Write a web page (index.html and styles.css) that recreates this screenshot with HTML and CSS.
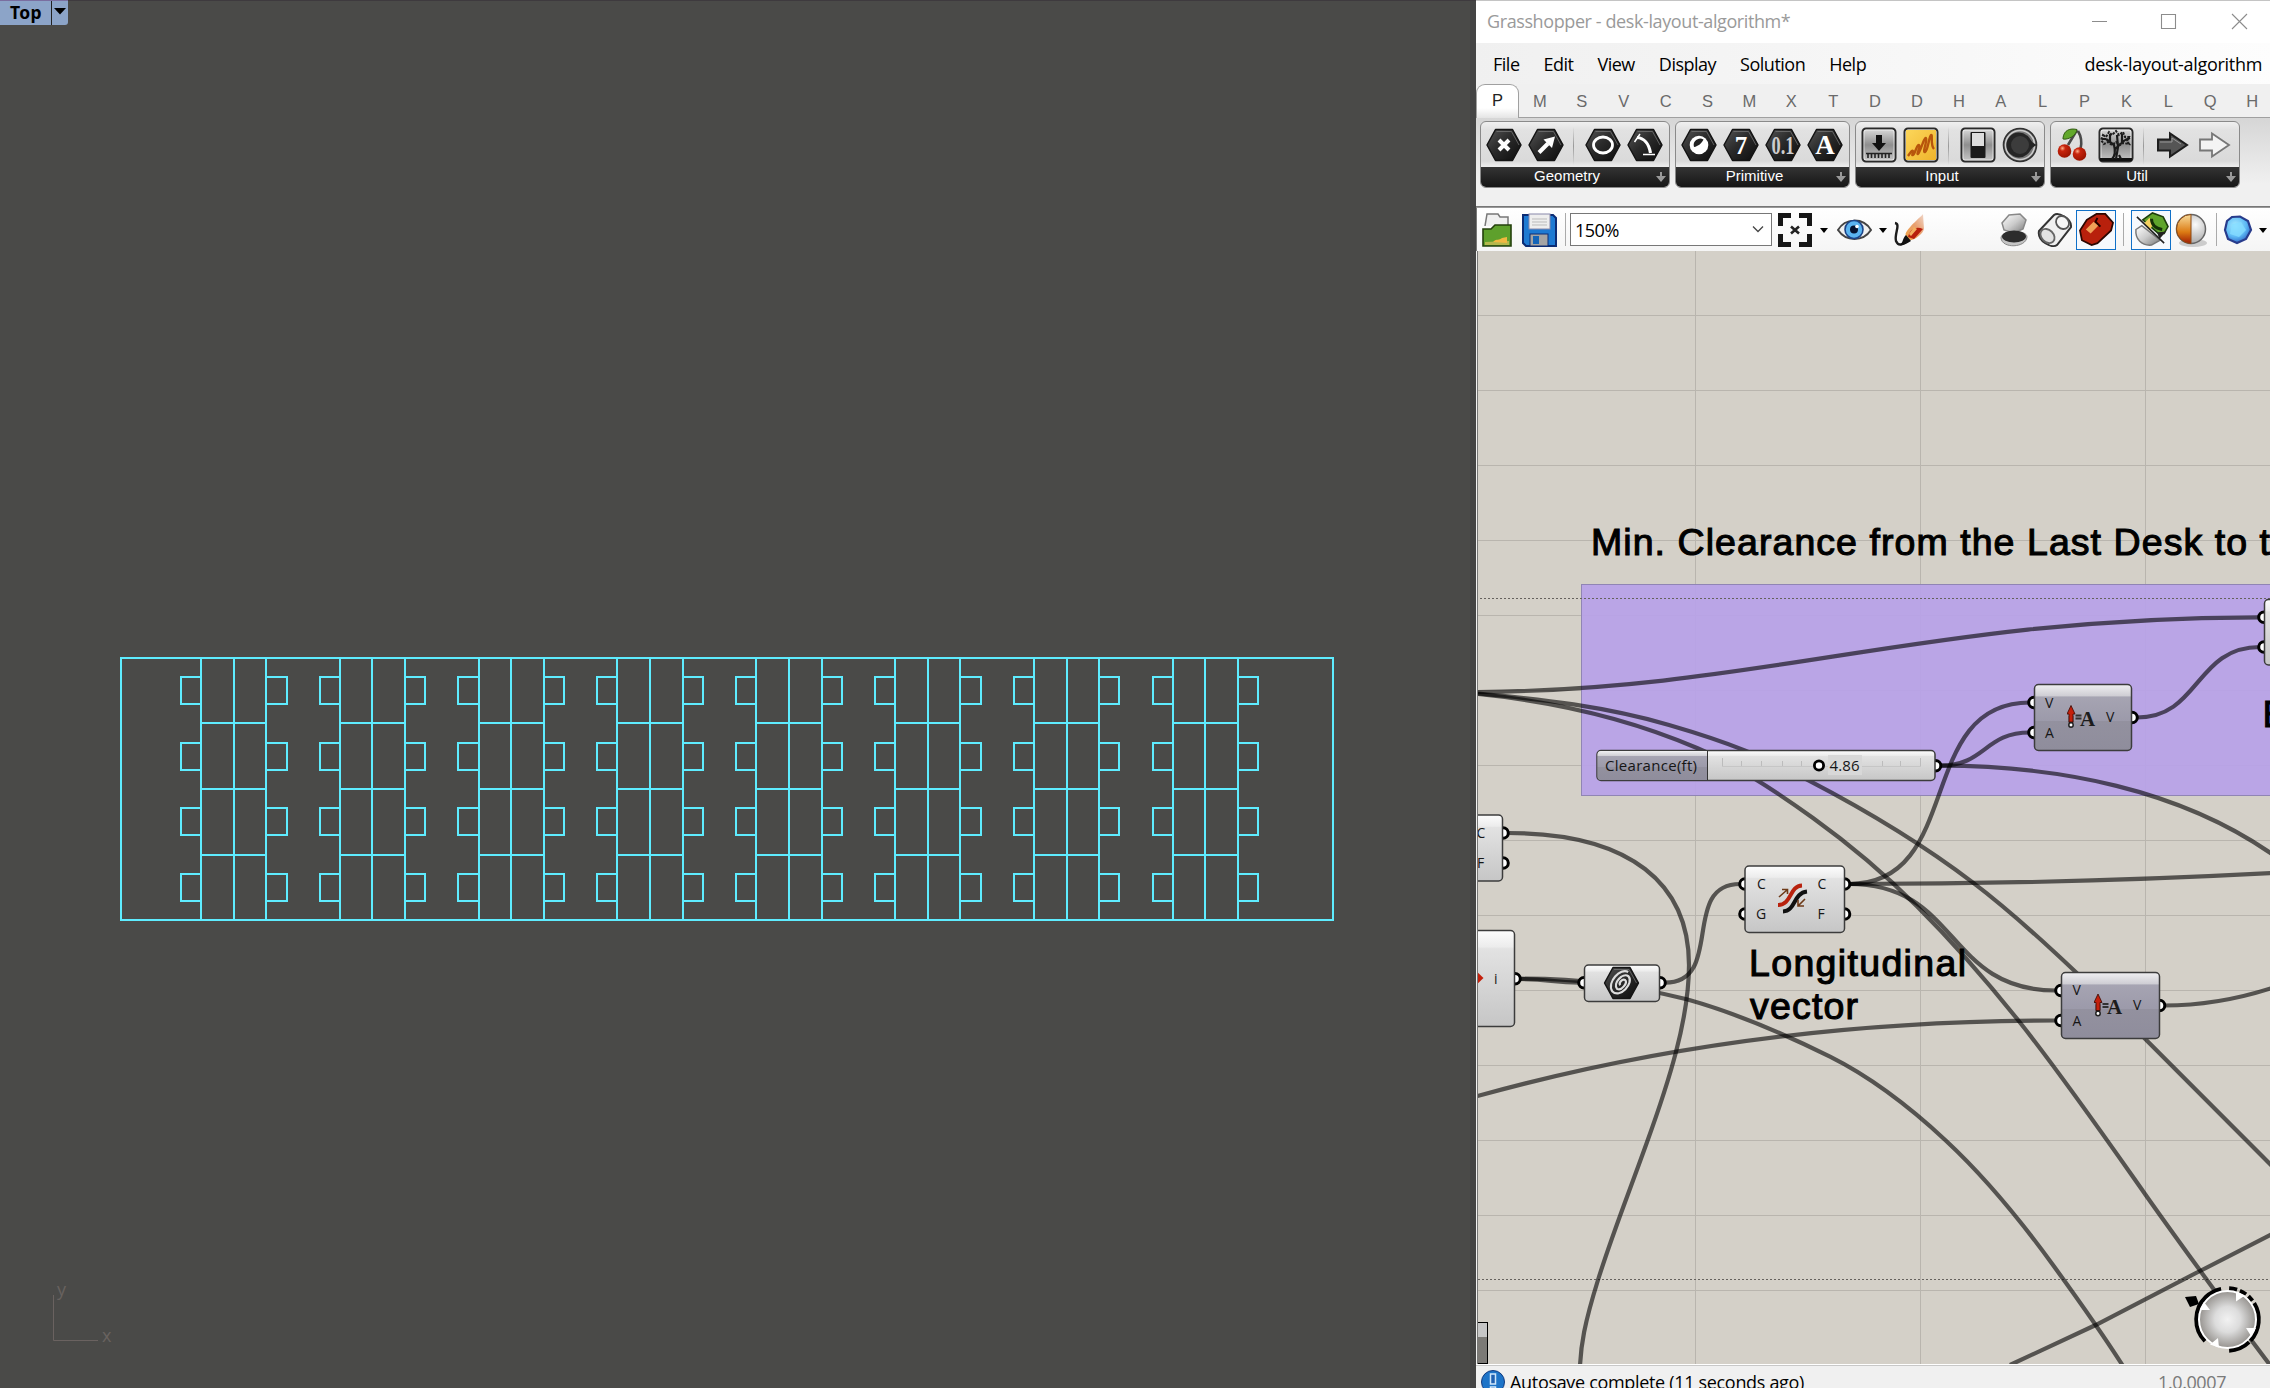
FILE: index.html
```html
<!DOCTYPE html>
<html lang="en">
<head>
<meta charset="utf-8">
<title>Grasshopper - desk-layout-algorithm*</title>
<link rel="stylesheet" href="styles.css">
</head>
<body>
<svg class="defs" width="0" height="0" aria-hidden="true">
  <defs>
    <linearGradient id="gHex" x1="0" y1="0" x2="1" y2="1"><stop offset="0" stop-color="#555"/><stop offset=".45" stop-color="#2b2b2b"/><stop offset="1" stop-color="#0c0c0c"/></linearGradient>
    <linearGradient id="gTile" x1="0" y1="0" x2="0" y2="1"><stop offset="0" stop-color="#dcdcdc"/><stop offset=".5" stop-color="#8e8e8e"/><stop offset="1" stop-color="#c8c8c8"/></linearGradient>
    <linearGradient id="gGold" x1="0" y1="0" x2="1" y2="1"><stop offset="0" stop-color="#fcd65a"/><stop offset="1" stop-color="#efb42c"/></linearGradient>
    <linearGradient id="gNode" x1="0" y1="0" x2="0" y2="1"><stop offset="0" stop-color="#fdfdfd"/><stop offset=".17" stop-color="#ececec"/><stop offset=".19" stop-color="#e2e2e2"/><stop offset="1" stop-color="#c6c6c6"/></linearGradient>
    <linearGradient id="gDark" x1="0" y1="0" x2="0" y2="1"><stop offset="0" stop-color="#f0f0f2"/><stop offset=".17" stop-color="#cfced4"/><stop offset=".19" stop-color="#a6a4b2"/><stop offset=".55" stop-color="#9c9aaa"/><stop offset=".56" stop-color="#93919f"/><stop offset="1" stop-color="#8f8d9c"/></linearGradient>
    <radialGradient id="gBall"><stop offset="0" stop-color="#f2f2f2"/><stop offset=".45" stop-color="#dcdcdc"/><stop offset="1" stop-color="#96938f"/></radialGradient>
    <radialGradient id="gCherry" cx=".35" cy=".3" r=".7"><stop offset="0" stop-color="#ffb08a"/><stop offset=".3" stop-color="#c8240c"/><stop offset="1" stop-color="#9c1400"/></radialGradient>
    <radialGradient id="gGem" cx=".4" cy=".35" r=".7"><stop offset="0" stop-color="#a8ecff"/><stop offset=".6" stop-color="#5cb8f4"/><stop offset="1" stop-color="#2a5cc0"/></radialGradient>
    <radialGradient id="gSilver" cx=".65" cy=".35" r=".7"><stop offset="0" stop-color="#fafafa"/><stop offset="1" stop-color="#a4a4a4"/></radialGradient>
    <linearGradient id="gAmber" x1="0" y1="0" x2="0" y2="1"><stop offset="0" stop-color="#f8dc9c"/><stop offset=".6" stop-color="#dc7c14"/><stop offset="1" stop-color="#a01c04"/></linearGradient>
    <linearGradient id="gFlame" x1="1" y1="0" x2="0" y2="1"><stop offset="0" stop-color="#f0d8cc"/><stop offset=".45" stop-color="#e8a070"/><stop offset="1" stop-color="#f0a040"/></linearGradient>
    <linearGradient id="gSteel" x1="0" y1="0" x2="1" y2="1"><stop offset="0" stop-color="#fff"/><stop offset=".5" stop-color="#ccc"/><stop offset="1" stop-color="#777"/></linearGradient>
    <symbol id="hex" viewBox="0 0 36 36"><path d="M9.500 2.500H26.500L35 18 26.500 33.500H9.500L1 18Z" fill="url(#gHex)" stroke="#141414" stroke-width="1.500" stroke-linejoin="round"/><path d="M10.500 4.500H25.500L33 18" fill="none" stroke="#7a7a7a" stroke-width="1" opacity=".7"/></symbol>
    <symbol id="tile" viewBox="0 0 36 36"><rect x="1.500" y="1.500" width="33" height="33" rx="3.500" fill="url(#gTile)" stroke="#2a2a2a" stroke-width="2"/><rect x="3" y="3" width="30" height="30" rx="2" fill="none" stroke="#fff" opacity=".6"/></symbol>
    <symbol id="vecamp" viewBox="0 0 26 26"><path d="M4 11V18" stroke="#2a0500" stroke-width="4.500"/><path d="M4 0.500L8 9H6V17H2V9H0Z" fill="#c4200c" stroke="#3a0800" stroke-width=".8"/><circle cx="4" cy="20" r="2.200" fill="#fff" stroke="#222" stroke-width="1.500"/><path d="M8.500 10.500h6M8.500 13.500h6" stroke="#333" stroke-width="1.800"/></symbol>
  </defs>
</svg>
<main class="screen">
  <section class="viewport">
    <div class="view-tab"><span class="view-name">Top</span><span class="view-drop"><svg width="12" height="7" viewBox="0 0 12 7"><path d="M0 0H12L6 6.500Z" fill="#000"/></svg></span></div>
    <svg class="plan" width="1476" height="1388" viewBox="0 0 1476 1388">
      <g class="cyan">
        <rect x="121" y="658" width="1212" height="262"/>
        <path d="M201 658V920M234 658V920M266 658V920M201 723H266M201 789H266M201 855H266"/>
        <path d="M201 677H181V704H201M201 743H181V770H201M201 808H181V835H201M201 874H181V901H201M266 677H287V704H266M266 743H287V770H266M266 808H287V835H266M266 874H287V901H266"/>
        <path d="M340 658V920M372 658V920M405 658V920M340 723H405M340 789H405M340 855H405"/>
        <path d="M340 677H320V704H340M340 743H320V770H340M340 808H320V835H340M340 874H320V901H340M405 677H425V704H405M405 743H425V770H405M405 808H425V835H405M405 874H425V901H405"/>
        <path d="M479 658V920M511 658V920M544 658V920M479 723H544M479 789H544M479 855H544"/>
        <path d="M479 677H458V704H479M479 743H458V770H479M479 808H458V835H479M479 874H458V901H479M544 677H564V704H544M544 743H564V770H544M544 808H564V835H544M544 874H564V901H544"/>
        <path d="M617 658V920M650 658V920M683 658V920M617 723H683M617 789H683M617 855H683"/>
        <path d="M617 677H597V704H617M617 743H597V770H617M617 808H597V835H617M617 874H597V901H617M683 677H703V704H683M683 743H703V770H683M683 808H703V835H683M683 874H703V901H683"/>
        <path d="M756 658V920M789 658V920M822 658V920M756 723H822M756 789H822M756 855H822"/>
        <path d="M756 677H736V704H756M756 743H736V770H756M756 808H736V835H756M756 874H736V901H756M822 677H842V704H822M822 743H842V770H822M822 808H842V835H822M822 874H842V901H822"/>
        <path d="M895 658V920M928 658V920M960 658V920M895 723H960M895 789H960M895 855H960"/>
        <path d="M895 677H875V704H895M895 743H875V770H895M895 808H875V835H895M895 874H875V901H895M960 677H981V704H960M960 743H981V770H960M960 808H981V835H960M960 874H981V901H960"/>
        <path d="M1034 658V920M1067 658V920M1099 658V920M1034 723H1099M1034 789H1099M1034 855H1099"/>
        <path d="M1034 677H1014V704H1034M1034 743H1014V770H1034M1034 808H1014V835H1034M1034 874H1014V901H1034M1099 677H1119V704H1099M1099 743H1119V770H1099M1099 808H1119V835H1099M1099 874H1119V901H1099"/>
        <path d="M1173 658V920M1205 658V920M1238 658V920M1173 723H1238M1173 789H1238M1173 855H1238"/>
        <path d="M1173 677H1153V704H1173M1173 743H1153V770H1173M1173 808H1153V835H1173M1173 874H1153V901H1173M1238 677H1258V704H1238M1238 743H1258V770H1238M1238 808H1258V835H1238M1238 874H1258V901H1238"/>
      </g>
      <path class="axis" d="M53.500 1295V1340.500H98"/>
      <text class="axis-name" x="57" y="1295.500">y</text><text class="axis-name" x="102" y="1342">x</text>
    </svg>
  </section>

  <section class="window">
    <header class="titlebar">
      <h1 class="title">Grasshopper - desk-layout-algorithm*</h1>
      <svg class="winbtns" width="170" height="42" viewBox="2084 0 170 42"><path d="M2092 20.500h15M2161.500 13.500h14v14h-14zM2232 13l15 15M2247 13l-15 15" fill="none" stroke="#8c8c8c" stroke-width="1.100"/></svg>
    </header>
    <nav class="menubar"><span>File</span><span>Edit</span><span>View</span><span>Display</span><span>Solution</span><span>Help</span><span class="doc">desk-layout-algorithm</span></nav>
    <nav class="tabs"><span class="tab active">P</span><span class="tab">M</span><span class="tab">S</span><span class="tab">V</span><span class="tab">C</span><span class="tab">S</span><span class="tab">M</span><span class="tab">X</span><span class="tab">T</span><span class="tab">D</span><span class="tab">D</span><span class="tab">H</span><span class="tab">A</span><span class="tab">L</span><span class="tab">P</span><span class="tab">K</span><span class="tab">L</span><span class="tab">Q</span><span class="tab">H</span></nav>
    <div class="ribbon">
      <div class="panel">
        <div class="icons">
          <svg viewBox="0 0 36 36"><use href="#hex"/><path d="M13 13L23 23M23 13L13 23" stroke="#fff" stroke-width="4"/></svg>
          <svg viewBox="0 0 36 36"><use href="#hex"/><path d="M11 25.500L20 16.500" stroke="#fff" stroke-width="4"/><path d="M15.500 12.500L27 9.500 24 21Z" fill="#fff"/></svg>
          <i class="sep"></i>
          <svg viewBox="0 0 36 36"><use href="#hex"/><ellipse cx="18" cy="18" rx="9.500" ry="8" fill="none" stroke="#fff" stroke-width="2.800"/></svg>
          <svg viewBox="0 0 36 36"><use href="#hex"/><path d="M10 10.500C17 11 22 17 23.500 26" fill="none" stroke="#fff" stroke-width="3.200"/><path d="M16 27.500H28M7.500 15L13 7" stroke="#fff" stroke-width="1.500"/></svg>
        </div>
        <div class="caption">Geometry<svg class="more" viewBox="0 0 12 12"><path d="M5 1h2v4h4L6 11 1 5h4z" fill="#999"/></svg></div>
      </div>
      <div class="panel narrow">
        <div class="icons">
          <svg viewBox="0 0 36 36"><use href="#hex"/><circle cx="18" cy="18" r="9.300" fill="#fff"/><path d="M13 20A6.500 6.500 0 0 1 22.500 12.500C21 16 17 19.500 13 20Z" fill="#222"/></svg>
          <svg viewBox="0 0 36 36"><use href="#hex"/><text class="glyph" x="18" y="27" font-size="25">7</text></svg>
          <svg viewBox="0 0 36 36"><use href="#hex"/><text class="glyph thin" x="18" y="26.500" font-size="25" textLength="23" lengthAdjust="spacingAndGlyphs">0.1</text></svg>
          <svg viewBox="0 0 36 36"><use href="#hex"/><text class="glyph" x="18" y="27" font-size="27">A</text></svg>
        </div>
        <div class="caption">Primitive<svg class="more" viewBox="0 0 12 12"><path d="M5 1h2v4h4L6 11 1 5h4z" fill="#999"/></svg></div>
      </div>
      <div class="panel">
        <div class="icons">
          <svg viewBox="0 0 36 36"><use href="#tile"/><path d="M15 8h6v8h4l-7 8-7-8h4z" fill="#111"/><path d="M5 26.500H31M7 26v5M10.500 26v5M14 26v5M17.500 26v5M21 26v5M24.500 26v5M28 26v5" stroke="#222" stroke-width="1.600"/></svg>
          <svg viewBox="0 0 36 36"><use href="#tile"/><rect x="3" y="3" width="30" height="30" fill="url(#gGold)"/><path d="M5 29C8 25 9 23 10 24S8 29 10 28 14 17 16 18 13 28 15 27 21 10 23 11 19 26 22 25 26 9 28 8 27 18 31 22" fill="none" stroke="#b8560c" stroke-width="2.400"/></svg>
          <i class="sep"></i>
          <svg viewBox="0 0 36 36"><use href="#tile"/><rect x="10.500" y="5" width="15" height="26" rx="1" fill="#1a1a1a"/><rect x="12" y="6" width="12" height="13" fill="#ddd"/></svg>
          <svg viewBox="0 0 36 36"><circle cx="18" cy="18" r="16.500" fill="#777" stroke="#333" stroke-width="1.600"/><circle cx="18" cy="18" r="14.500" fill="none" stroke="#ccc" stroke-width="1.500"/><path d="M25 8.500A12.500 12.500 0 1 0 25 27.500C28 26 29 20 35 18 29 16 28 10 25 8.500Z" fill="#252525"/><circle cx="18" cy="18" r="9" fill="#3c3c3c"/></svg>
        </div>
        <div class="caption">Input<svg class="more" viewBox="0 0 12 12"><path d="M5 1h2v4h4L6 11 1 5h4z" fill="#999"/></svg></div>
      </div>
      <div class="panel">
        <div class="icons">
          <svg viewBox="0 0 36 36"><path d="M21 3L12 18M22 4C25 9 26 16 24.500 22" fill="none" stroke="#4a4a4a" stroke-width="2.600"/><path d="M7 11C8 3 14 1 21 2.500 20 9 12 13 7 12Z" fill="#62a82c" stroke="#345c16"/><circle cx="8.500" cy="24" r="6.800" fill="url(#gCherry)"/><circle cx="23.500" cy="27" r="6.800" fill="url(#gCherry)"/></svg>
          <svg viewBox="0 0 36 36"><use href="#tile"/><path d="M2 31H34V34H2Z" fill="#111"/><path d="M14 32C18 28 17 22 16 18L8 12M17 22L27 13M18 32 20 20 19 8M12 15V7M24 16V7M8 12H4M27 13 32 11M21 28 23 32" fill="none" stroke="#1a1a1a" stroke-width="2.200"/><path d="M5 8l3 2 3-5 3 3 4-4 3 4 4-3 2 5 4 0-2 4 2 3-6-1-3 2-4-3-4 3-4-3-4 2-3-4z" fill="none" stroke="#1e1e1e" stroke-width="2" stroke-dasharray="2.500 1.200"/></svg>
          <i class="sep"></i>
          <svg viewBox="0 0 36 36"><path d="M3 12.500H15V6.500L32 18 15 29.500V23.500H3Z" fill="#555" stroke="#1e1e1e" stroke-width="2"/><path d="M5 15H17V11L26 17" fill="none" stroke="#999"/></svg>
          <svg viewBox="0 0 36 36"><path d="M3 12.500H15V6.500L32 18 15 29.500V23.500H3Z" fill="#f4f4f4" stroke="#777" stroke-width="1.800"/></svg>
        </div>
        <div class="caption">Util<svg class="more" viewBox="0 0 12 12"><path d="M5 1h2v4h4L6 11 1 5h4z" fill="#999"/></svg></div>
      </div>
    </div>

    <div class="toolbar">
      <svg class="tb open" viewBox="0 0 36 36"><path d="M6 14L8 2 19 2 21 5H29V14" fill="#f0f0f0" stroke="#777" stroke-width="1.500"/><path d="M4 34V17H12L16 13H32V34Z" fill="#5ea02c" stroke="#24400c" stroke-width="1.600"/><path d="M6 30 30 29V33H6Z" fill="#b4b84c"/><path d="M14 30C18 26 20 29 23 26L28 25V31Z" fill="#f0b840"/></svg>
      <svg class="tb save" viewBox="0 0 36 36"><path d="M2 3H31L34 6V34H4L1 31V3Z" fill="#1e7ad2" stroke="#0c2c74" stroke-width="2"/><rect x="7" y="2" width="21" height="15" fill="#eee" stroke="#88a"/><path d="M10 7H25M10 10H25M10 13H25" stroke="#bbb"/><rect x="8" y="22" width="18" height="12" fill="#a4a4a4" stroke="#0c2c74"/><rect x="11" y="24" width="6" height="8" fill="#1464b8"/></svg>
      <i class="tsep"></i>
      <div class="combo"><span>150%</span><svg width="12" height="7" viewBox="0 0 12 7"><path d="M1 .5L6 5.500 11 .5" fill="none" stroke="#444" stroke-width="1.300"/></svg></div>
      <svg class="tb frame" viewBox="0 0 36 36"><path d="M3.500 14V3.500H14M22 3.500H32.500V14M32.500 22V32.500H22M14 32.500H3.500V22" fill="none" stroke="#161616" stroke-width="5"/><path d="M14 14.500L22 21.500M22 14.500L14 21.500" stroke="#222" stroke-width="2.600"/></svg>
      <svg class="drop" viewBox="0 0 8 5"><path d="M0 0H8L4 5Z"/></svg>
      <svg class="tb eye" viewBox="0 0 36 36"><path d="M2 18C9 6 27 5 35 18 27 30 10 30 2 18Z" fill="#f0f0f0" stroke="#444" stroke-width="2"/><circle cx="18" cy="17.500" r="9" fill="#5ab4f0" stroke="#1c4488" stroke-width="1.600"/><circle cx="18" cy="17.500" r="4" fill="#061430"/><circle cx="21" cy="14.500" r="1.800" fill="#fff"/></svg>
      <svg class="drop" viewBox="0 0 8 5"><path d="M0 0H8L4 5Z"/></svg>
      <svg class="tb pen" viewBox="0 0 36 36"><path d="M31 2C30 4 16 15 13.500 22L15 28C21 30 31 22 32 17Z" fill="url(#gFlame)"/><path d="M16 25C18 17 24 14 31 17L22 27Z" fill="#b8200c"/><path d="M17 22L22 15 25 17 19 24Z" fill="#f4b060"/><path d="M3 11C9 12 2 22 4 29 7 36 12 31 17 28" fill="none" stroke="#1c1c1c" stroke-width="2.400"/><path d="M8 33C11 31 11 25 14 23L19 29C15 31 12 34 8 33Z" fill="#111"/></svg>
      <span class="grow"></span>
      <svg class="tb" viewBox="0 0 36 36"><path d="M6 11L13 3 24 2 30 8 27 17 18 21 8 18Z" fill="url(#gSteel)" stroke="#888" stroke-width="1.500"/><path d="M5 26C5 18 31 17 31 25 30 36 6 37 5 26Z" fill="#c4c4c4" stroke="#888"/><ellipse cx="18" cy="24.500" rx="12" ry="6" fill="#2c2c2c"/></svg>
      <svg class="tb" viewBox="0 0 36 36"><path d="M2 19L17 3C21 0 35 6 34 15L20 33C15 37 0 29 2 19Z" fill="#f0f0f0" stroke="#333" stroke-width="2"/><ellipse cx="25.500" cy="10.500" rx="6" ry="7" transform="rotate(-45 25.500 10.500)" fill="#f6f6f6" stroke="#555" stroke-width="1.800"/><ellipse cx="10.500" cy="24" rx="6" ry="8" transform="rotate(-45 10.500 24)" fill="#e2e2e2" stroke="#666" stroke-width="1.800"/></svg>
      <span class="sel"><svg class="tb" viewBox="0 0 36 36"><path d="M1 19L8 8 18 2H27L35 11 33 19 19 32 13 34 3 29Z" fill="#b8200c" stroke="#2c0600" stroke-width="1.800"/><path d="M7 18L15 10 20 14 12 22Z" fill="#f0a058"/><path d="M19 6L17 10 22 15" fill="none" stroke="#200" stroke-width="2"/></svg></span>
      <i class="tsep"></i>
      <span class="sel"><svg class="tb" viewBox="0 0 36 36"><path d="M9 8L19 1 30 5 35 15 31 22 25 22Z" fill="#5ea42c" stroke="#1c3c0c" stroke-width="1.600"/><path d="M2 18L8 14 27 29 18 34C8 35 1 28 2 18Z" fill="url(#gSteel)" stroke="#777" stroke-width="1.500"/><path d="M10 12L16 6 19 14 16 19Z" fill="#f4d060"/><path d="M24 21L33 20 26 28Z" fill="#222"/><path d="M3 5L31 32" stroke="#222" stroke-width="1.600"/><path d="M18 7C18 14 23 17 29 18" fill="none" stroke="#143008" stroke-width="3"/></svg></span>
      <svg class="tb ball" viewBox="0 0 36 36"><ellipse cx="20" cy="31" rx="14" ry="4" fill="#ccc"/><circle cx="18" cy="17" r="14.500" fill="url(#gSilver)" stroke="#666" stroke-width="1.500"/><path d="M18 2.500A14.500 14.500 0 0 0 18 31.500Z" fill="url(#gAmber)" stroke="#8c4a14"/></svg>
      <i class="tsep"></i>
      <svg class="tb gem" viewBox="0 0 36 36"><path d="M12 5L20 4.500 28 9 31 18 26 27 17 31 8 27 5 18 7 9Z" fill="url(#gGem)" stroke="#283c8c" stroke-width="2.200"/><path d="M12 12L21 10 26 18 19 25 10 22Z" fill="#84dcff" opacity=".8"/></svg>
      <svg class="drop last" viewBox="0 0 8 5"><path d="M0 0H8L4 5Z"/></svg>
    </div>

    <svg class="canvas" width="792" height="1113" viewBox="1478 251 792 1113">
      <rect x="1478" y="251" width="792" height="1113" fill="#d4d0c8"/>
      <g class="grid"><path d="M1695.500 251V1364M1920.500 251V1364M2145.500 251V1364M1478 315.500H2270M1478 390.500H2270M1478 465.500H2270M1478 540.500H2270M1478 615.500H2270M1478 690.500H2270M1478 765.500H2270M1478 840.500H2270M1478 915.500H2270M1478 990.500H2270M1478 1065.500H2270M1478 1140.500H2270M1478 1215.500H2270M1478 1290.500H2270"/></g>
      <rect x="1581.500" y="584.500" width="700" height="211" fill="#b8a2e8" fill-opacity=".94" stroke="#9085b4"/>
      <path class="page-edge" d="M1480 598.500H2270M1478 1279.500H2270"/>
      <g class="label">
        <text x="1591" y="555" textLength="679">Min. Clearance from the Last Desk to t</text>
        <text x="2262.500" y="727">E</text>
        <text x="1749" y="976" textLength="217">Longitudinal</text>
        <text x="1750" y="1018.500" textLength="108">vector</text>
      </g>
      <g class="wires">
        <path d="M1478 692C1760 690 1930 617 2260 617.300"/>
        <path d="M1478 693.500C1541.700 699.200 1605.300 706.500 1669 725S1762.300 756.400 1809 780.700S1918.300 841.100 1973 882.700S2087.700 983.100 2145 1038.700L2272 1166"/>
        <path d="M1478 694C1551 701.300 1624 716.600 1697 748C1735.700 764.600 1774.300 790.100 1813 818C1847.600 842.900 1882.100 871.400 1916.700 906C1950.500 939.800 1984.200 977.800 2018 1020C2060.300 1072.900 2102.700 1133.900 2145 1194C2163 1219.600 2226 1307 2270 1365"/>
        <path d="M1508 833C1632 833 1689 885 1689 965C1689 1020 1668 1084 1646.700 1143C1625.500 1202 1612 1235 1598 1280S1581 1345 1580 1366"/>
        <path d="M1665 982.700C1725 982.700 1680 884 1740 884"/>
        <path d="M1519 979C1550 979 1552 982.700 1580 982.700"/>
        <path d="M1519 978.700C1580 978.700 1625 984 1686.700 999.300C1734.500 1012.700 1782.200 1032.800 1830 1056.700C1868.700 1076 1907.300 1104.700 1946 1140.700C1981.700 1173.900 2017.300 1215.800 2053 1265C2076.300 1297 2100 1330 2123 1366"/>
        <path d="M1476 1096.500C1660 1045 1850 1020.500 2056 1020.500"/>
        <path d="M1849 884C1960 884 1945 990.500 2056 990.500"/>
        <path d="M1849 884C1965 884 1914 702.500 2030 702.500"/>
        <path d="M1849 884C1990 884 2130 880.500 2272 873"/>
        <path d="M1940 765.700C1986 765.700 1984 732.500 2030 732.500"/>
        <path d="M1940 765.700C2060 765.700 2180 790 2272 854"/>
        <path d="M2137 717.500C2200 717.500 2195 647 2260 647"/>
        <path d="M2164 1005.500C2200 1005.500 2235 1000 2272 988"/>
        <path d="M2010 1365L2095.700 1325 2199 1271.500 2272 1234"/>
      </g>
      <g class="ports">
        <circle cx="1503" cy="833" r="5.300"/><circle cx="1503" cy="863" r="5.300"/><circle cx="1515" cy="978.700" r="5.300"/>
        <circle cx="1584" cy="982.700" r="5.300"/><circle cx="1660" cy="982.700" r="5.300"/>
        <circle cx="1745" cy="884" r="5.300"/><circle cx="1745" cy="914" r="5.300"/><circle cx="1844.500" cy="884" r="5.300"/><circle cx="1844.500" cy="914" r="5.300"/>
        <circle cx="1935.500" cy="765.700" r="5.300"/>
        <circle cx="2034" cy="702.500" r="5.300"/><circle cx="2034" cy="732.500" r="5.300"/><circle cx="2132" cy="717.500" r="5.300"/>
        <circle cx="2061" cy="990.500" r="5.300"/><circle cx="2061" cy="1020.500" r="5.300"/><circle cx="2159.500" cy="1005.500" r="5.300"/>
        <circle cx="2264" cy="617.300" r="5.300"/><circle cx="2264" cy="647" r="5.300"/>
      </g>
      <g class="nodes">
        <rect x="1440" y="815" width="62.500" height="66" rx="4"/>
        <rect x="1440" y="930.500" width="74.500" height="96" rx="4"/>
        <rect x="1584.500" y="965" width="75" height="36.500" rx="4"/>
        <rect x="1745" y="866" width="99.500" height="66.500" rx="4"/>
        <rect x="2264.500" y="599.500" width="60" height="65.500" rx="4"/>
        <rect x="1597" y="750.500" width="338" height="30" rx="4"/>
        <rect class="dark" x="2034.500" y="684.500" width="97" height="66" rx="4"/>
        <rect class="dark" x="2061.500" y="972.500" width="98" height="66" rx="4"/>
      </g>
      <path d="M1707 751H1601Q1597.500 751 1597.500 754.500V777Q1597.500 780 1601 780H1707Z" fill="url(#gDark)"/><path d="M1707.500 751V780" stroke="#333"/>
      <path d="M1722.500 758V766M1741.500 761V766M1761.500 761V766M1782.500 761V766M1801.500 761V766M1882.500 761V766M1900.500 761V766M1920.500 758V766" stroke="#bcbcbc"/><path d="M1722 766.500H1921" stroke="#c6c6c6"/>
      <rect x="1828" y="755" width="34" height="20" fill="#d8d8d8"/>
      <circle cx="1819" cy="765.500" r="4.600" fill="#fff" stroke="#000" stroke-width="2.800"/>
      <g class="pins">
        <text x="1605" y="770.500" font-size="15" textLength="92">Clearance(ft)</text><text x="1829.500" y="770.500" font-size="15" textLength="30">4.86</text>
        <text x="1476.500" y="838">C</text><text x="1477" y="867.500">F</text><text x="1494" y="983.500">i</text>
        <text x="1757" y="889">C</text><text x="1756" y="919">G</text><text x="1817.500" y="889">C</text><text x="1817.500" y="919">F</text>
        <text x="2045" y="707.500">V</text><text x="2045" y="737.500">A</text><text x="2106" y="722">V</text>
        <text x="2072.500" y="995">V</text><text x="2072.500" y="1025.500">A</text><text x="2133" y="1010">V</text>
      </g>
      <use href="#vecamp" x="2067" y="705" width="26" height="26"/><text class="amp" x="2080" y="725.500">A</text>
      <use href="#vecamp" x="2094" y="993.500" width="26" height="26"/><text class="amp" x="2107" y="1014">A</text>
      <path d="M1476 971L1483.500 978 1476 985Z" fill="#c4200c"/>
      <g fill="none"><path d="M1778 905C1792 905 1789 886 1802 885.500" stroke="#b8220e" stroke-width="4"/><path d="M1783 911.500C1796 911 1793 893 1807 891.500" stroke="#111" stroke-width="4"/><path d="M1779 897L1787 890M1782 889.500H1787.500V894M1805 899L1798 906M1798 900V906H1804" stroke="#6e3a18" stroke-width="1.600"/></g>
      <use href="#hex" x="1603.500" y="965" width="36" height="36"/><g fill="none" stroke="#ddd" transform="rotate(-48 1621 983)"><path d="M1634 981C1632 972 1612 972 1609 982C1608 993 1630 993 1631 984C1630 977 1615 977 1614 984C1615 989 1626 988 1626 984C1625 981 1619 981 1619 984" stroke-width="2.200"/></g>
      <rect x="1470" y="1322.500" width="17.500" height="41" fill="#7c7a76" stroke="#000"/><rect x="1478" y="1323" width="9" height="14" fill="#c6c6c6"/>
      <g>
        <circle cx="2227.500" cy="1319.500" r="31" fill="none" stroke="#000" stroke-width="4.500" stroke-dasharray="66 8 8 3 7 3 6 3 40 2 22 30" transform="rotate(136 2227.500 1319.500)"/>
        <path d="M2185 1297L2196 1296 2199 1304 2190 1307Z"/>
        <circle cx="2227.500" cy="1319.500" r="28.500" fill="url(#gBall)" stroke="#fff" stroke-width="2"/>
        <path d="M2236 1292V1301.500L2245 1295.500ZM2256 1328H2246L2251 1336ZM2219 1347.500L2218 1338 2210 1344.500ZM2200 1310H2210L2204 1302Z" fill="#fff"/>
      </g>
    </svg>
    <footer class="statusbar">
      <svg width="24" height="24" viewBox="0 0 24 24"><circle cx="12" cy="12" r="11.500" fill="#1e74c8" stroke="#143c80"/><path d="M9.500 4h5v10h-5zM9.500 17h5v4h-5z" fill="#2060b0" stroke="#cfe6fa" stroke-width="1.500"/></svg>
      <span class="msg">Autosave complete (11 seconds ago)</span><span class="ver">1.0.0007</span>
    </footer>
  </section>
</main>
</body>
</html>
```
FILE: styles.css
```css
* { box-sizing: border-box; }
body { margin: 0; width: 2270px; height: 1388px; overflow: hidden; font-family: "Open Sans", "Noto Sans", sans-serif; background: #4a4a48; }
.defs { position: absolute; }
.screen { display: grid; grid-template-columns: 1476px 794px; height: 1388px; }

.viewport { position: relative; background: #4a4a48; box-shadow: inset 0 1px #3e3a3e, inset -6px 0 #444; overflow: hidden; }
.view-tab { position: absolute; left: 0; top: 0; display: flex; width: 68px; height: 25px; background: #8ca4c8; border-top: 1px solid #7a6ea0; border-bottom-right-radius: 3px; font: bold 17.500px/22px "Noto Sans", sans-serif; color: #000; }
.view-name { width: 52px; padding-left: 10px; letter-spacing: .4px; border-right: 1px solid #222; }
.view-drop { flex: 1; display: flex; justify-content: center; padding-top: 7px; }
.plan { display: block; }
.cyan { fill: none; stroke: #5eecff; stroke-width: 2; }
.axis { fill: none; stroke: #6a6260; }
.axis-name { font: 18px "Open Sans", sans-serif; fill: #68625f; }

.window { display: grid; grid-template-rows: 43px 41px 34px 89px 44px 1113px 24px; background: #f0f0f0; height: 1388px; overflow: hidden; }
.titlebar { display: flex; justify-content: space-between; background: #fff; border-top: 1px solid #c4c4c4; padding: 0 19px 0 11px; }
.title { margin: 0; font-size: 18px; font-weight: 400; line-height: 41px; color: #9a9a9a; letter-spacing: -.4px; white-space: nowrap; }
.menubar { display: flex; gap: 24px; padding: 0 11px 0 17px; line-height: 42px; font-size: 18px; letter-spacing: -.5px; background: linear-gradient(90deg, #f0f0f0, #fdfdfd); color: #000; }
.doc { margin-left: auto; letter-spacing: -.3px; }
.tabs { display: flex; position: relative; border-bottom: 1px solid #a0a0a0; }
.tab { flex: 0 0 41.900px; text-align: center; font: 16.500px/35px "Liberation Sans", sans-serif; color: #6a6a6a; }
.tab.active { flex-basis: 43px; height: 34px; line-height: 31px; color: #222; background: linear-gradient(#fff 70%, #e4e4e4); border: 1px solid #a0a0a0; border-bottom: 0; border-radius: 9px 9px 0 0; }
.ribbon { display: flex; gap: 5px; padding: 3px 4px 0; background: linear-gradient(#d6d6d6, #f0f0f0 75%); border-bottom: 1px solid #777; align-items: flex-start; }
.panel { width: 190px; height: 67px; border: 1px solid #8a8a8a; border-radius: 6px; overflow: hidden; background: linear-gradient(#f0f0f0 0, #e2e2e2 12%, #dadada 60%, #ececec 68%); }
.panel.narrow { width: 175px; }
.icons { display: flex; gap: 6px; height: 45px; padding: 5px 5px 0; }
.icons svg { width: 36px; height: 36px; flex: none; }
.sep { width: 1px; height: 38px; margin: 0 5px 0 3px; background: linear-gradient(transparent, #999, transparent); }
.caption { position: relative; height: 21px; padding-right: 16px; text-align: center; font: 15px/17px "Liberation Sans", sans-serif; color: #fff; background: linear-gradient(#343434, #141414); }
.more { position: absolute; right: 2px; top: 4px; width: 12px; height: 12px; }
.glyph { font-family: "Liberation Serif", serif; font-weight: bold; fill: #fff; text-anchor: middle; }
.glyph.thin { fill: #ccc; }

.toolbar { display: flex; align-items: center; background: linear-gradient(#fff, #f5f5f5); border-left: 1px solid #777; border-top: 1px solid #999; }
.tb { width: 36px; height: 36px; flex: none; display: block; }
.open { margin-left: 2px; }
.save { margin-left: 7px; }
.tsep { width: 1px; height: 33px; margin: 0 7px; background: #aaa; }
.tsep + .combo { margin-left: -3px; }
.combo { display: flex; align-items: center; justify-content: space-between; width: 202px; height: 33px; padding: 0 7px 0 4px; border: 1px solid #777; background: #fff; font-size: 18px; letter-spacing: -.5px; }
.frame { margin-left: 5px; }
.drop { width: 8px; height: 5px; flex: none; margin: 1px 0 0 7px; }
.eye { margin-left: 8px; }
.pen { margin-left: 5px; }
.grow { flex: 1; }
.toolbar .grow + .tb { margin-right: 5px; }
.sel { display: grid; place-items: center; flex: none; width: 40px; height: 40px; border: 1px solid #1070c8; background: #f6f9fd; }
.sel .tb { width: 35px; height: 35px; }
.tb + .sel { margin-left: 3px; }
.ball { margin-left: 2px; }
.gem { margin-left: -4px; }
.last { margin: 1px 6px 0 3px; }

.canvas { display: block; margin-left: 1px; width: 793px; height: 1113px; border-left: 1px solid #777; }
.grid { stroke: #b9b5ae; fill: none; }
.page-edge { stroke: #66625e; stroke-dasharray: 2 2; }
.label { font: 37.500px "Liberation Sans", sans-serif; fill: #000; stroke: #000; stroke-width: 1.100px; }
.wires { fill: none; stroke: #000; stroke-opacity: .6; stroke-width: 4.200px; }
.wires path { fill: none; }
.ports { fill: #fff; stroke: #000; stroke-width: 3px; }
.nodes { fill: url(#gNode); stroke: #3c3c3c; stroke-width: 1.500px; }
.nodes .dark { fill: url(#gDark); }
.pins { font: 14px "Open Sans", sans-serif; fill: #161616; }
.amp { font: bold 21px "Liberation Serif", serif; fill: #1c1c1c; }
.statusbar { display: flex; align-items: flex-start; border-top: 1px solid #fff; box-shadow: inset 0 1px #c8c8c8; padding: 5px 47px 0 5px; background: #f0f0f0; overflow: hidden; }
.statusbar svg { flex: none; }
.msg { margin-left: 5px; font-size: 18px; line-height: 25px; letter-spacing: -.32px; white-space: nowrap; }
.ver { margin-left: auto; font-size: 18px; line-height: 25px; color: #7a7a7a; letter-spacing: -.4px; }
```
